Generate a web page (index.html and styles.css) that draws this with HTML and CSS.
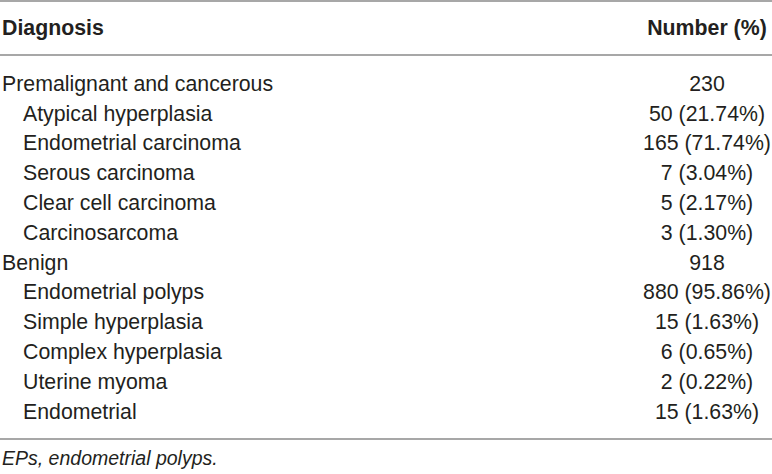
FILE: index.html
```html
<!DOCTYPE html>
<html lang="en">
<head>
    <meta charset="UTF-8">
    <title>Diagnosis table</title>
    <link rel="stylesheet" href="styles.css">
</head>
<body>
    <table class="dx-table">
        <thead>
            <tr>
                <th class="label">Diagnosis</th>
                <th class="num">Number (%)</th>
            </tr>
        </thead>
        <tbody>
            <tr class="first"><td class="label">Premalignant and cancerous</td><td class="num">230</td></tr>
            <tr><td class="label sub">Atypical hyperplasia</td><td class="num">50 (21.74%)</td></tr>
            <tr><td class="label sub">Endometrial carcinoma</td><td class="num">165 (71.74%)</td></tr>
            <tr><td class="label sub">Serous carcinoma</td><td class="num">7 (3.04%)</td></tr>
            <tr><td class="label sub">Clear cell carcinoma</td><td class="num">5 (2.17%)</td></tr>
            <tr><td class="label sub">Carcinosarcoma</td><td class="num">3 (1.30%)</td></tr>
            <tr><td class="label">Benign</td><td class="num">918</td></tr>
            <tr><td class="label sub">Endometrial polyps</td><td class="num">880 (95.86%)</td></tr>
            <tr><td class="label sub">Simple hyperplasia</td><td class="num">15 (1.63%)</td></tr>
            <tr><td class="label sub">Complex hyperplasia</td><td class="num">6 (0.65%)</td></tr>
            <tr><td class="label sub">Uterine myoma</td><td class="num">2 (0.22%)</td></tr>
            <tr class="last"><td class="label sub">Endometrial</td><td class="num">15 (1.63%)</td></tr>
        </tbody>
    </table>
    <p class="footnote">EPs, endometrial polyps.</p>
</body>
</html>
```

FILE: styles.css
```css
body { margin: 0; padding: 0; background: #fff; color: #231f20; font-family: "Liberation Sans", Arial, sans-serif; }
.dx-table { width: 772px; border-collapse: collapse; border-top: 2px solid #a7a7a7; border-bottom: 2px solid #a7a7a7; font-size: 21.3px; }
.dx-table th { font-weight: bold; height: 52px; padding: 0; border-bottom: 2px solid #a7a7a7; }
.dx-table td { height: 29.8px; padding: 0; line-height: 22px; }
.dx-table .label { text-align: left; padding-left: 2px; }
.dx-table .label.sub { padding-left: 23px; }
.dx-table .num { text-align: center; width: 130px; }
.dx-table tr.first td { padding-top: 13px; }
.dx-table tr.last td { padding-bottom: 11px; }
.footnote { margin: 0; padding: 7px 0 0 2px; font-size: 19.5px; font-style: italic; line-height: 22px; }
```
